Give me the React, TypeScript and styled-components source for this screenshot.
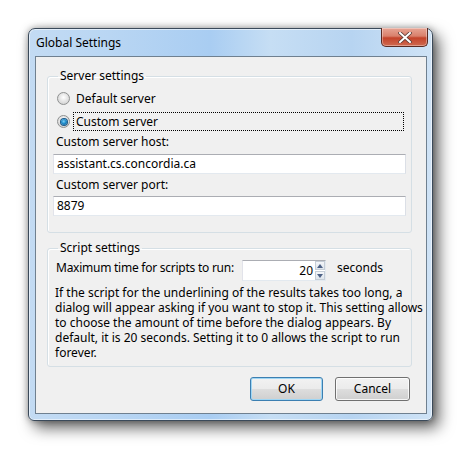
import React from "react";
import styled, { createGlobalStyle } from "styled-components";

const Global = createGlobalStyle`
  html, body { margin: 0; padding: 0; background: #ffffff; }
  body { font-family: "Noto Sans", "Open Sans", sans-serif; font-size: 12px; color: #000; }
  * { box-sizing: border-box; }
`;

const Page = styled.div`
  padding: 28px 0 0 28px;
  width: 471px;
  height: 458px;
`;

const Window = styled.div`
  width: 405px;
  height: 393px;
  border: 1px solid #3b4a5a;
  border-radius: 7px 7px 6px 6px;
  background: linear-gradient(90deg, #c3dbf3 0%, #b9d6f3 20%, #a9cdf2 45%, #c6def4 60%, #b7d4f1 80%, #cfe3f6 100%);
  box-shadow: 6px 7px 15px rgba(0,0,0,0.6), 0 0 7px rgba(0,0,0,0.35), inset 0 0 0 1px rgba(255,255,255,0.55);
  display: flex;
  flex-direction: column;
  padding: 0 5px 6px 6px;
`;

const TitleBar = styled.div`
  height: 27px;
  display: flex;
  justify-content: space-between;
  align-items: flex-start;
`;

const Title = styled.div`
  line-height: 27px;
  padding-left: 1px;
  font-size: 12px;
  color: #000;
`;

const CloseButton = styled.div`
  width: 47px;
  height: 19px;
  margin-top: -1px;
  margin-right: -1px;
  border: 1px solid #5a2a22;
  border-top: none;
  border-radius: 0 0 5px 5px;
  background: linear-gradient(180deg, #e7a595 0%, #d9806c 45%, #c4432b 55%, #cf6a50 100%);
  box-shadow: inset 0 0 0 1px rgba(255,255,255,0.35);
  display: flex;
  align-items: center;
  justify-content: center;
`;

const Client = styled.div`
  flex: 1;
  border: 1px solid #6f8090;
  background: #f0f0f0;
  display: flex;
  flex-direction: column;
  padding: 0 14px 12px 11px;
`;

const Group = styled.fieldset<{ $top: number; $pad: string }>`
  margin: ${(p) => p.$top}px 0 0 0;
  padding: ${(p) => p.$pad};
  border: 1px solid #d5dfe5;
  border-radius: 3px;
  box-shadow: inset 1px 1px 0 #fff;
  min-width: 0;
`;

const Legend = styled.legend`
  padding: 0 2px;
  margin-left: 5px;
  line-height: 16px;
  font-size: 12px;
`;

const RadioRow = styled.div<{ $mt: number }>`
  display: flex;
  align-items: center;
  height: 19px;
  margin-top: ${(p) => p.$mt}px;
  padding-left: 4px;
  gap: 3px;
`;

const RadioCircle = styled.span<{ $checked?: boolean }>`
  width: 13px;
  height: 13px;
  border-radius: 50%;
  border: 1px solid #8f9191;
  background: radial-gradient(circle at 50% 40%, #ffffff 0%, #e6e6e6 45%, #c9c9c9 100%);
  display: flex;
  align-items: center;
  justify-content: center;
  flex: none;
  &::after {
    content: "";
    display: ${(p) => (p.$checked ? "block" : "none")};
    width: 6px;
    height: 6px;
    border-radius: 50%;
    background: radial-gradient(circle at 45% 40%, #7fd0f5 0%, #1e8ccb 45%, #0a4f86 100%);
    box-shadow: 0 0 0 1px #1b5a8a;
  }
`;

const RadioLabel = styled.span<{ $focus?: boolean }>`
  flex: 1;
  height: 19px;
  line-height: 17px;
  padding-left: 2px;
  border: 1px dotted ${(p) => (p.$focus ? "#000" : "transparent")};
  margin-right: 2px;
`;

const FieldLabel = styled.div<{ $mt: number }>`
  line-height: 16px;
  margin-top: ${(p) => p.$mt}px;
  padding-left: 3px;
`;

const TextBox = styled.div<{ $mt: number }>`
  height: 20px;
  margin-top: ${(p) => p.$mt}px;
  background: #fff;
  border: 1px solid #e3e9ef;
  border-top-color: #abadb3;
  border-left-color: #e2e3ea;
  border-right-color: #dbdfe6;
  line-height: 18px;
  padding-left: 3px;
`;

const SpinRow = styled.div`
  display: flex;
  align-items: flex-start;
  height: 21px;
`;

const SpinLabel = styled.div`
  width: 189px;
  line-height: 16px;
  padding-left: 3px;
  letter-spacing: -0.25px;
  white-space: nowrap;
`;

const SpinBox = styled.div`
  width: 84px;
  height: 21px;
  display: flex;
  background: #fff;
  border: 1px solid #e3e9ef;
  border-top-color: #abadb3;
  border-left-color: #e2e3ea;
`;

const SpinValue = styled.div`
  flex: 1;
  text-align: right;
  padding-right: 2px;
  line-height: 19px;
`;

const SpinButtons = styled.div`
  width: 10px;
  display: flex;
  flex-direction: column;
  gap: 1px;
`;

const SpinButton = styled.div`
  flex: 1;
  border: 1px solid #c5cdd6;
  background: linear-gradient(180deg, #f4f6f9, #dfe5ec);
  display: flex;
  align-items: center;
  justify-content: center;
`;

const Unit = styled.div`
  margin-left: 11px;
  line-height: 16px;
`;

const Help = styled.p`
  margin: 4px 0 0 0;
  padding-left: 2px;
  line-height: 15px;
  white-space: nowrap;
`;

const Buttons = styled.div`
  display: flex;
  justify-content: flex-end;
  gap: 12px;
  margin-top: 10px;
  padding-right: 2px;
`;

const Button = styled.div<{ $default?: boolean }>`
  width: ${(p) => (p.$default ? 73 : 75)}px;
  height: 24px;
  border-radius: 3px;
  border: 1px solid ${(p) => (p.$default ? "#3c7fb1" : "#707070")};
  background: linear-gradient(180deg, #f2f2f2 0%, #ebebeb 48%, #dddddd 52%, #cfcfcf 100%);
  box-shadow: inset 0 0 0 1px ${(p) => (p.$default ? "#9fd6f4" : "rgba(255,255,255,0.8)")};
  display: flex;
  align-items: center;
  justify-content: center;
  line-height: 16px;
`;

const Arrow = ({ up }: { up?: boolean }) => (
  <svg width="6" height="4" viewBox="0 0 6 4">
    <path d={up ? "M0 4 L3 0 L6 4 Z" : "M0 0 L6 0 L3 4 Z"} fill="#4d6185" />
  </svg>
);

export default function App() {
  return (
    <Page>
      <Global />
      <Window>
        <TitleBar>
          <Title>Global Settings</Title>
          <CloseButton>
            <svg width="14" height="11" viewBox="0 0 14 11">
              <path d="M2 1 L12 10 M12 1 L2 10" stroke="#5a3a35" strokeWidth="3.6" strokeLinecap="square" />
              <path d="M2 1 L12 10 M12 1 L2 10" stroke="#ffffff" strokeWidth="2" strokeLinecap="square" />
            </svg>
          </CloseButton>
        </TitleBar>
        <Client>
          <Group $top={11} $pad="5px 5px 16px 5px">
            <Legend>Server settings</Legend>
            <RadioRow $mt={0}>
              <RadioCircle />
              <RadioLabel>Default server</RadioLabel>
            </RadioRow>
            <RadioRow $mt={4}>
              <RadioCircle $checked />
              <RadioLabel $focus>Custom server</RadioLabel>
            </RadioRow>
            <FieldLabel $mt={3}>Custom server host:</FieldLabel>
            <TextBox $mt={4}>assistant.cs.concordia.ca</TextBox>
            <FieldLabel $mt={3}>Custom server port:</FieldLabel>
            <TextBox $mt={3}>8879</TextBox>
          </Group>
          <Group $top={7} $pad="4px 5px 6px 5px">
            <Legend>Script settings</Legend>
            <SpinRow>
              <SpinLabel>Maximum time for scripts to run:</SpinLabel>
              <SpinBox>
                <SpinValue>20</SpinValue>
                <SpinButtons>
                  <SpinButton><Arrow up /></SpinButton>
                  <SpinButton><Arrow /></SpinButton>
                </SpinButtons>
              </SpinBox>
              <Unit>seconds</Unit>
            </SpinRow>
            <Help>
              If the script for the underlining of the results takes too long, a<br />
              dialog will appear asking if you want to stop it. This setting allows<br />
              to choose the amount of time before the dialog appears. By<br />
              default, it is 20 seconds. Setting it to 0 allows the script to run<br />
              forever.
            </Help>
          </Group>
          <Buttons>
            <Button $default>OK</Button>
            <Button>Cancel</Button>
          </Buttons>
        </Client>
      </Window>
    </Page>
  );
}
